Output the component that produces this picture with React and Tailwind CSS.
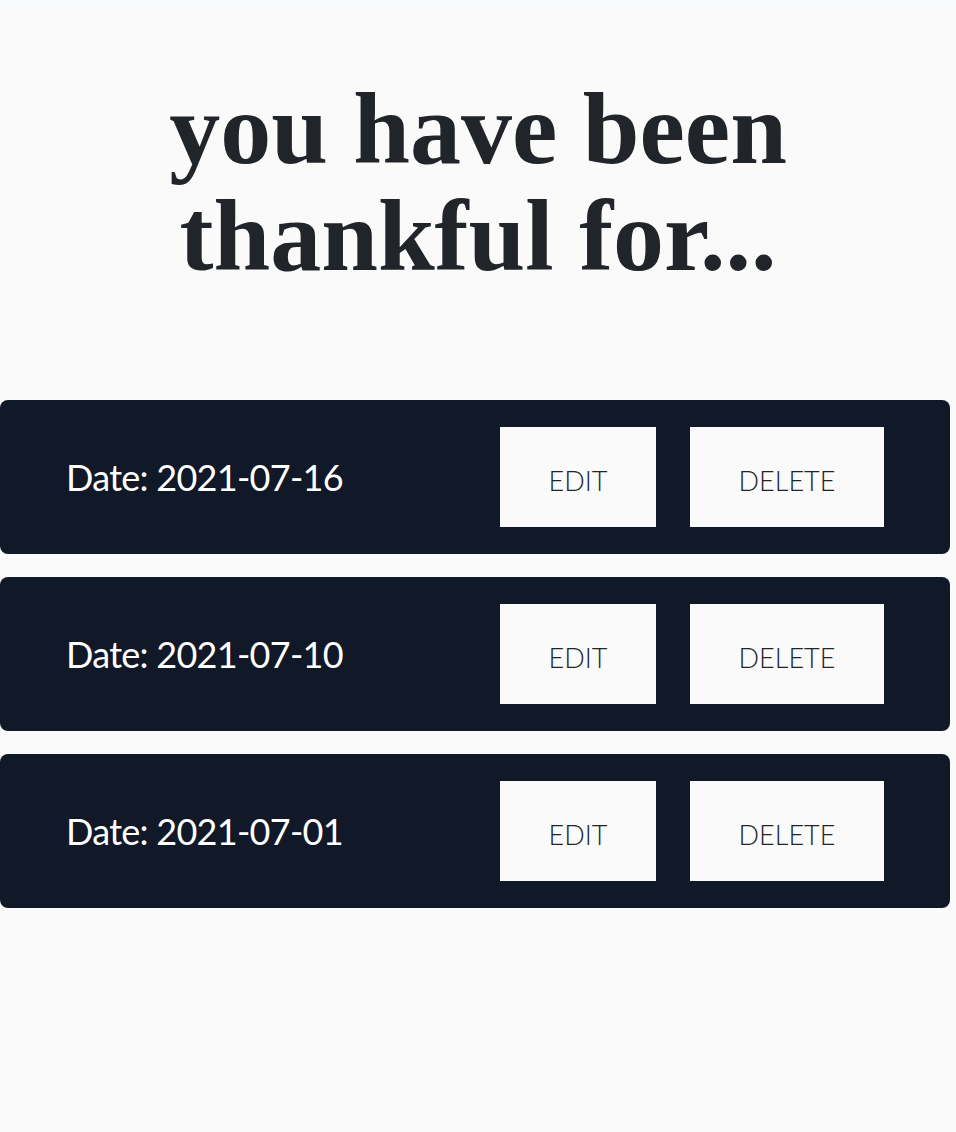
import React from "react";

const entries = [
  { id: 1, date: "2021-07-16" },
  { id: 2, date: "2021-07-10" },
  { id: 3, date: "2021-07-01" },
];

// Single entry row
const EntryCard = ({ date }) => (
  <div className="flex items-center justify-between h-[154px] mr-[6px] pl-[66px] pr-[66px] rounded-lg bg-[#111827]">
    <p className="text-[36px] leading-none text-white font-['Lato',sans-serif] tracking-[-0.02em]">
      Date: {date}
    </p>
    <div className="flex items-center gap-[34px]">
      <button className="w-[156px] h-[100px] pt-[8px] bg-[#fafafa] text-[#212529] text-[27px] font-light font-['Lato',sans-serif]">
        EDIT
      </button>
      <button className="w-[194px] h-[100px] pt-[8px] bg-[#fafafa] text-[#212529] text-[27px] font-light font-['Lato',sans-serif]">
        DELETE
      </button>
    </div>
  </div>
);

export default function App() {
  return (
    <div className="min-h-screen bg-[#fafafa]">
      {/* top strip */}
      <div className="h-[14px] bg-[#f8f9fa]"></div>

      <h1 className="mt-[61px] text-center text-[102px] leading-[107px] font-bold text-[#212529] font-['Liberation_Serif',serif]">
        you have been
        <br />
        thankful for...
      </h1>

      <div className="mt-[111px] flex flex-col gap-[23px]">
        {entries.map((e) => (
          <EntryCard key={e.id} date={e.date} />
        ))}
      </div>
    </div>
  );
}
